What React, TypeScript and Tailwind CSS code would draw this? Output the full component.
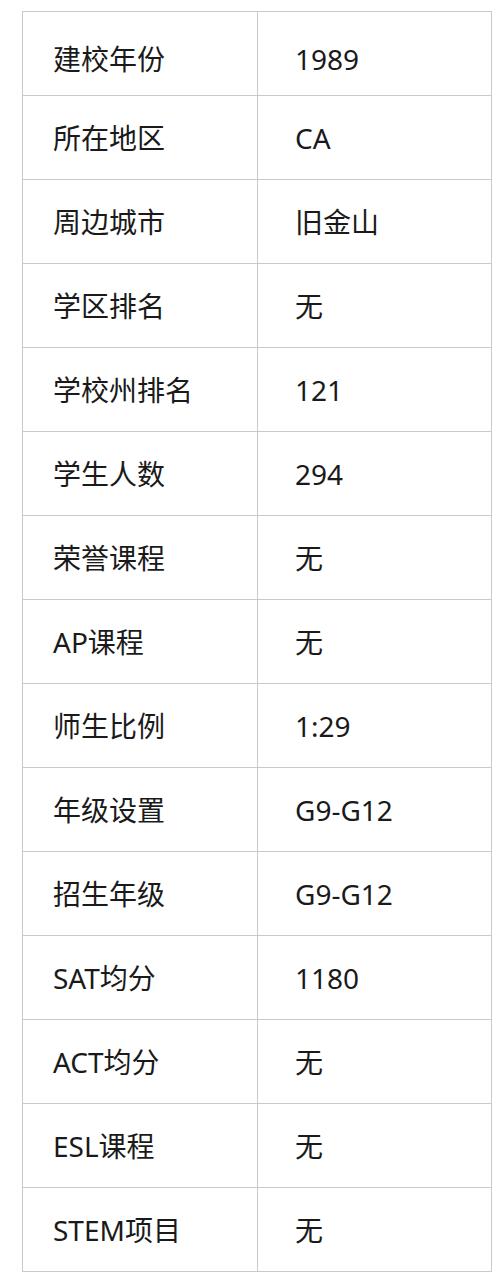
const rows: [string, string][] = [
  ["建校年份", "1989"],
  ["所在地区", "CA"],
  ["周边城市", "旧金山"],
  ["学区排名", "无"],
  ["学校州排名", "121"],
  ["学生人数", "294"],
  ["荣誉课程", "无"],
  ["AP课程", "无"],
  ["师生比例", "1:29"],
  ["年级设置", "G9-G12"],
  ["招生年级", "G9-G12"],
  ["SAT均分", "1180"],
  ["ACT均分", "无"],
  ["ESL课程", "无"],
  ["STEM项目", "无"],
];

export default function App() {
  return (
    <div
      className="w-[500px] min-h-[1284px] bg-white pt-[11px] pl-[22px]"
      style={{ fontFamily: '"Noto Sans", "Noto Sans CJK SC", sans-serif' }}
    >
      <table className="w-[470px] border-collapse text-[28px] text-[#1a1a1a]">
        <tbody>
          {rows.map(([label, value], i) => (
            <tr key={label} className="h-[84px]">
              <td
                className={`w-[235px] border border-[#c9c9c9] pl-[30px] align-middle ${
                  i === 0 ? "pt-[11px]" : ""
                }`}
              >
                {label}
              </td>
              <td
                className={`border border-[#c9c9c9] pl-[37px] align-middle ${
                  i === 0 ? "pt-[11px]" : ""
                }`}
              >
                {value}
              </td>
            </tr>
          ))}
        </tbody>
      </table>
    </div>
  );
}
